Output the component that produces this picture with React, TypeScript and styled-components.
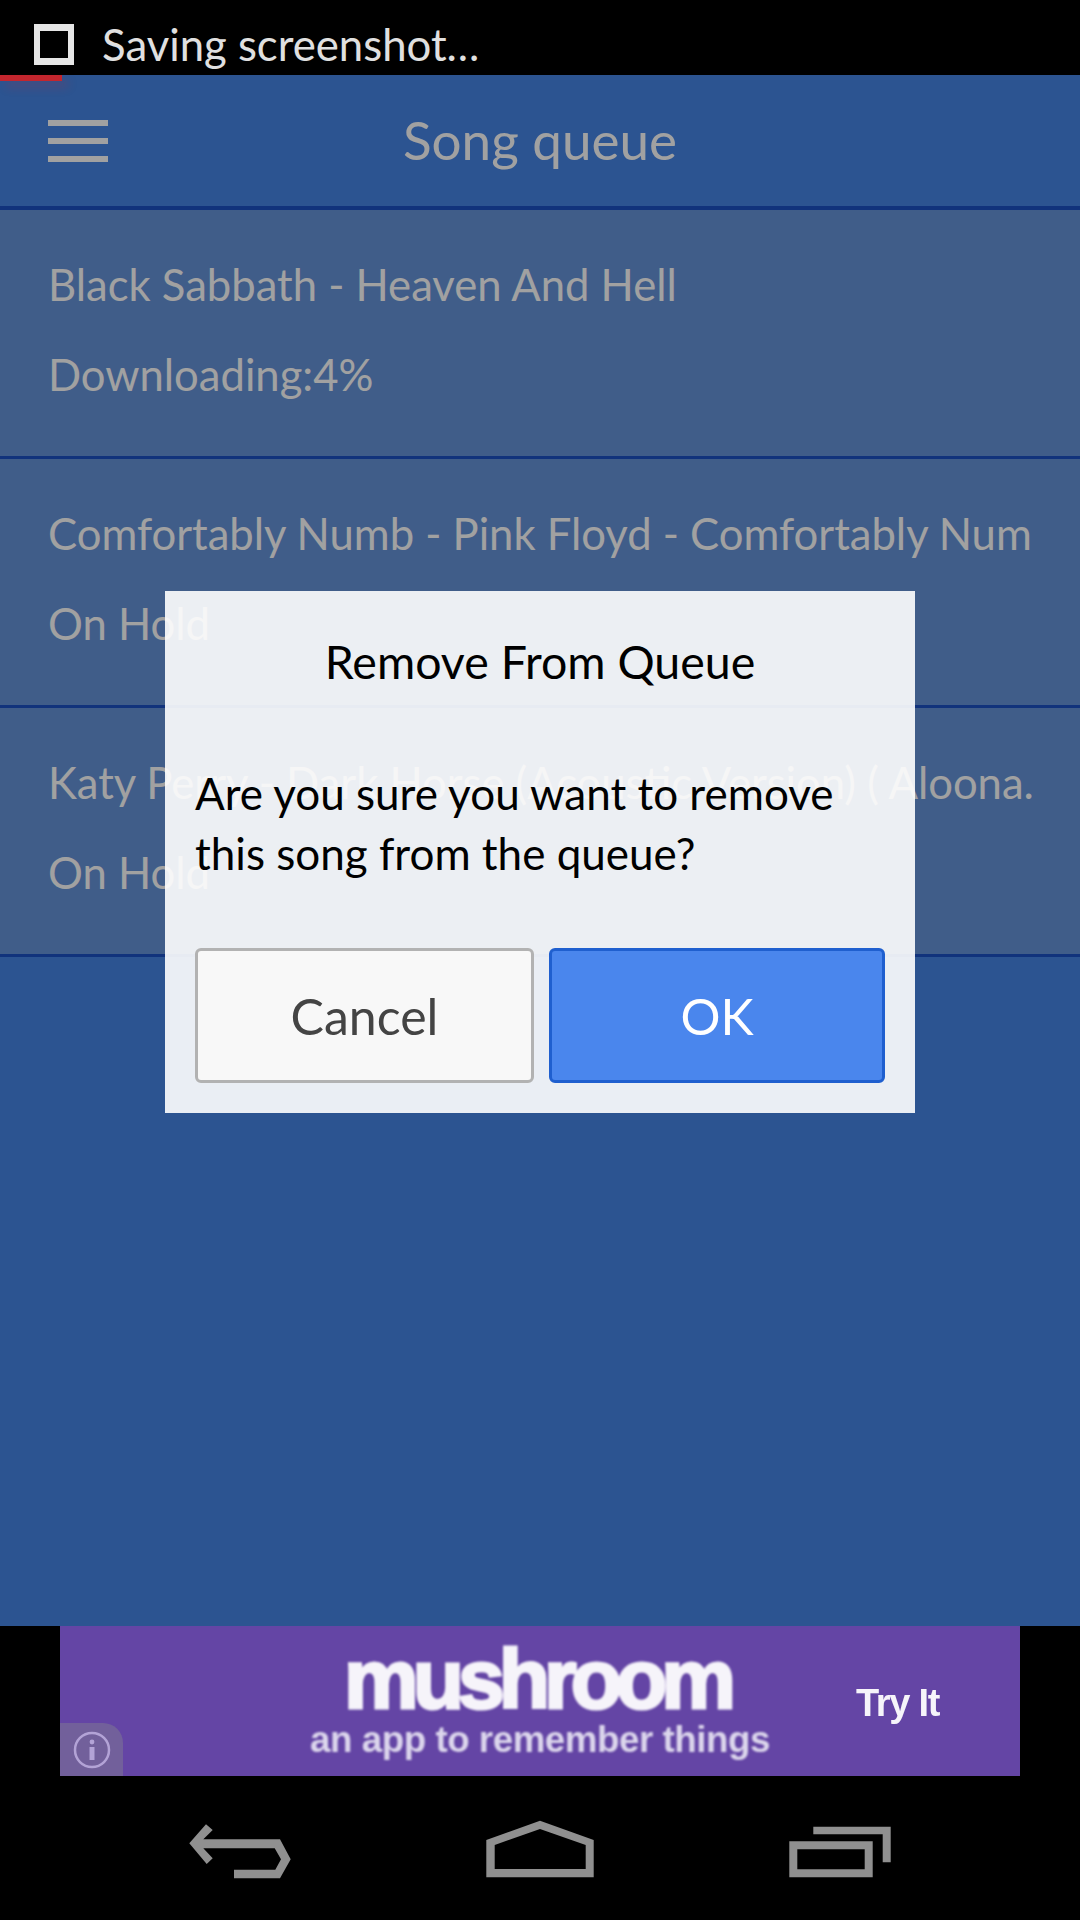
import React from "react";
import styled, { createGlobalStyle } from "styled-components";

const songs = [
  { title: "Black Sabbath - Heaven And Hell", status: "Downloading:4%" },
  { title: "Comfortably Numb - Pink Floyd - Comfortably Numb (Live)", status: "On Hold" },
  { title: "Katy Perry - Dark Horse (Acoustic Version) ( Aloona.", status: "On Hold" },
];

const App: React.FC = () => (
  <Screen>
    <GlobalStyle />
    <StatusBar>
      <StatusIcon />
      <StatusText>Saving screenshot…</StatusText>
    </StatusBar>
    <AppArea>
      <Header>
        <MenuButton>
          <Bar />
          <Bar />
          <Bar />
        </MenuButton>
        <HeaderTitle>Song queue</HeaderTitle>
      </Header>
      {songs.map((song) => (
        <SongRow key={song.title}>
          <SongLine>{song.title}</SongLine>
          <SongLine>{song.status}</SongLine>
        </SongRow>
      ))}
      <Overlay>
        <Dialog>
          <DialogTitle>Remove From Queue</DialogTitle>
          <DialogBody>Are you sure you want to remove this song from the queue?</DialogBody>
          <DialogButtons>
            <DialogButton>Cancel</DialogButton>
            <DialogButton $primary>OK</DialogButton>
          </DialogButtons>
        </Dialog>
      </Overlay>
      <ScreenshotProgress />
    </AppArea>
    <AdStrip>
      <AdBanner>
        <AdCopy>
          <AdBrand>mushroom</AdBrand>
          <AdTagline>an app to remember things</AdTagline>
        </AdCopy>
        <AdAction>Try It</AdAction>
        <AdInfo>
          <svg width="38" height="38" viewBox="0 0 38 38" fill="none" stroke="#b3a3d6">
            <circle cx="19" cy="19" r="17" strokeWidth="2.5" />
            <circle cx="19" cy="11" r="2.4" fill="#b3a3d6" stroke="none" />
            <path d="M19 16v13" strokeWidth="5" />
          </svg>
        </AdInfo>
      </AdBanner>
    </AdStrip>
    <NavBar>
      <NavSlot>
        <svg width="140" height="100" viewBox="0 0 140 100" fill="#909090">
          <path d="M19.3 43.3 36 24.3 42.7 30 33.3 39.3H110L120.7 59.3 110 78.3H64V69.7H105.3L111 59.3 104.7 48.3H33.3L42.7 58.3 36.7 64Z" />
        </svg>
      </NavSlot>
      <NavSlot>
        <svg width="140" height="100" viewBox="0 0 140 100" fill="#909090">
          <path
            fillRule="evenodd"
            d="M16.3 40 70 20.7 123.7 40V77.3H16.3ZM24.7 45V69H115.7V45L70 29Z"
          />
        </svg>
      </NavSlot>
      <NavSlot>
        <svg width="140" height="100" viewBox="0 0 140 100" fill="#909090">
          <path d="M43.3 26.7H120.7V62.3H112.7V34.3H43.3Z" />
          <path fillRule="evenodd" d="M19.3 41.3H102.7V77.3H19.3ZM27.3 49.3V69.3H94.7V49.3Z" />
        </svg>
      </NavSlot>
    </NavBar>
  </Screen>
);

export default App;

const GlobalStyle = createGlobalStyle`
  html, body {
    margin: 0;
    padding: 0;
    background: #000;
  }
  * {
    box-sizing: border-box;
  }
`;

const Screen = styled.div`
  width: 1080px;
  height: 1920px;
  display: flex;
  flex-direction: column;
  background: #000;
  font-family: Lato, "Liberation Sans", sans-serif;
  overflow: hidden;
`;

const StatusBar = styled.div`
  height: 75px;
  display: flex;
  align-items: center;
  padding: 14px 0 0 34px;
  gap: 28px;
`;

const StatusIcon = styled.div`
  width: 40px;
  height: 41px;
  border: solid #e6e6e6;
  border-width: 7px 6px;
`;

const StatusText = styled.div`
  font-size: 43.7px;
  color: #e0e0e0;
  margin-top: -2px;
`;

const AppArea = styled.div`
  position: relative;
  flex: 1;
  background: #4685e6;
`;

const Header = styled.div`
  height: 135px;
  display: flex;
  align-items: center;
  justify-content: center;
  border-bottom: 4px solid #1b52c4;
  position: relative;
`;

const MenuButton = styled.div`
  position: absolute;
  left: 48px;
  top: 45px;
  display: flex;
  flex-direction: column;
  gap: 12px;
`;

const Bar = styled.div`
  width: 60px;
  height: 6px;
  background: #fff;
`;

const HeaderTitle = styled.div`
  font-size: 53px;
  color: #fff;
  margin-top: -3px;
`;

const SongRow = styled.div`
  height: 249px;
  padding: 29px 48px 0;
  background: #6693da;
  border-bottom: 3px solid #1b52c4;
`;

const SongLine = styled.div`
  font-size: 43.6px;
  line-height: 90px;
  color: #fff;
  white-space: nowrap;
  overflow: hidden;
`;

const Overlay = styled.div`
  position: absolute;
  inset: 0;
  display: flex;
  justify-content: center;
  padding-top: 516px;
  background: rgba(0, 0, 0, 0.37);
`;

const Dialog = styled.div`
  width: 750px;
  height: 522px;
  padding: 0 30px;
  background: rgba(255, 255, 255, 0.9);
`;

const DialogTitle = styled.div`
  height: 140px;
  line-height: 140px;
  font-size: 46.5px;
  text-align: center;
  color: #000;
`;

const DialogBody = styled.div`
  height: 217px;
  padding-top: 32px;
  font-size: 44px;
  line-height: 60px;
  color: #000;
`;

const DialogButtons = styled.div`
  display: grid;
  grid-template-columns: 339px 336px;
  gap: 15px;
`;

const DialogButton = styled.div<{ $primary?: boolean }>`
  height: 135px;
  display: flex;
  align-items: center;
  justify-content: center;
  font-size: 50px;
  border-radius: 6px;
  border: 3px solid ${(p) => (p.$primary ? "#1f5fcf" : "#b2b2b2")};
  background: ${(p) => (p.$primary ? "#4a86ed" : "#f8f8f8")};
  color: ${(p) => (p.$primary ? "#fff" : "#444")};
`;

const ScreenshotProgress = styled.div`
  position: absolute;
  left: 0;
  top: 0;
  width: 62px;
  height: 6px;
  background: #c4262e;
  box-shadow: 6px 6px 10px rgba(196, 38, 46, 0.25);
`;

const AdStrip = styled.div`
  height: 150px;
  display: flex;
  justify-content: center;
`;

const AdBanner = styled.div`
  position: relative;
  width: 960px;
  display: grid;
  grid-template-columns: 1fr auto 1fr;
  align-items: center;
  background: #6445a5;
  color: #f6f4fa;
`;

const AdCopy = styled.div`
  grid-column: 2;
  display: flex;
  flex-direction: column;
  align-items: center;
  margin-top: -6px;
  filter: blur(0.9px);
`;

const AdBrand = styled.div`
  font-family: "Liberation Sans", sans-serif;
  font-weight: 700;
  font-size: 84px;
  line-height: 84px;
  letter-spacing: -6px;
  margin-right: 6px;
  -webkit-text-stroke: 3px #f6f4fa;
`;

const AdTagline = styled.div`
  font-family: "Liberation Sans", sans-serif;
  font-weight: 700;
  font-size: 36.8px;
  line-height: 38px;
  letter-spacing: -0.5px;
  color: #dcd6ec;
`;

const AdAction = styled.div`
  grid-column: 3;
  justify-self: end;
  margin: 4px 81px 0 0;
  font-family: "Liberation Sans", sans-serif;
  font-weight: 700;
  font-size: 38px;
  letter-spacing: -1.3px;
  filter: blur(0.7px);
`;

const AdInfo = styled.div`
  position: absolute;
  left: 0;
  bottom: 0;
  width: 63px;
  height: 53px;
  display: flex;
  align-items: center;
  justify-content: center;
  background: #72609b;
  border-top-right-radius: 20px;
`;

const NavBar = styled.div`
  height: 144px;
  display: grid;
  grid-template-columns: repeat(3, 1fr);
  padding: 4px 90px 0;
`;

const NavSlot = styled.div`
  display: flex;
  align-items: center;
  justify-content: center;
`;
